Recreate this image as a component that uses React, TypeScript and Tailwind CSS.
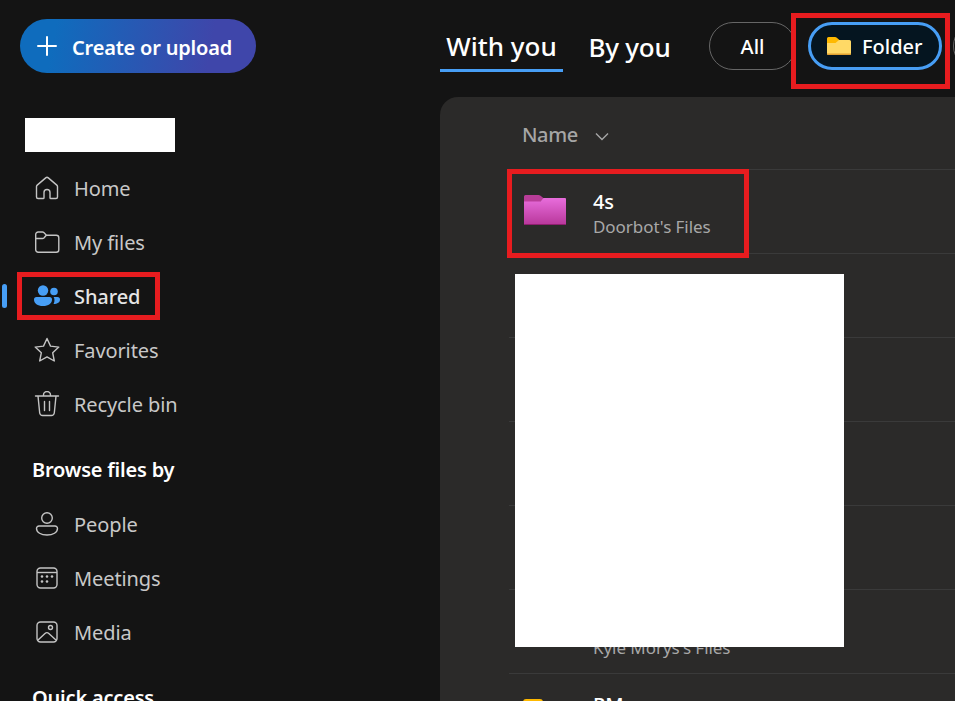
import React from 'react';

const font = { fontFamily: '"Noto Sans", "Open Sans", sans-serif' };

const HomeIcon = () => (
    <svg width="26" height="26" viewBox="0 0 26 26" fill="none" stroke="#c4c4c4" strokeWidth="1.4">
        <path d="M4 23.500h5.200a.8.8 0 0 0 .8-.8v-5.200a3 3 0 0 1 6 0v5.200a.8.8 0 0 0 .8.8H22a1.500 1.500 0 0 0 1.500-1.500V11.600a2 2 0 0 0-.7-1.500L14.300 2.900a2 2 0 0 0-2.600 0L3.200 10.100a2 2 0 0 0-.7 1.500V22A1.500 1.500 0 0 0 4 23.500z" />
    </svg>
);

const FilesIcon = () => (
    <svg width="26" height="26" viewBox="0 0 26 26" fill="none" stroke="#c4c4c4" strokeWidth="1.4">
        <path d="M1.700 5.500a2.500 2.500 0 0 1 2.500-2.500h4.300a2 2 0 0 1 1.300.5l2.700 2.700h9.800a2.500 2.500 0 0 1 2.500 2.500v12.100a2.500 2.500 0 0 1-2.500 2.500H4.200a2.500 2.500 0 0 1-2.500-2.500z" />
        <path d="M1.700 9.500h6.800a2 2 0 0 0 1.400-.6l2.400-2.700" />
    </svg>
);

const SharedIcon = () => (
    <svg width="26" height="26" viewBox="0 0 26 26" fill="#479ef5">
        <circle cx="9" cy="7.500" r="5.200" />
        <path d="M0 16.500a2.500 2.500 0 0 1 2.500-2.500h13a2.500 2.500 0 0 1 2.500 2.500c0 4-3.500 6.500-9 6.500s-9-2.500-9-6.500z" />
        <circle cx="20" cy="8.500" r="3.800" />
        <path d="M19.500 21c.8-1.300 1.100-3 .9-4.500a4 4 0 0 0-.8-2.500h3.900a2.500 2.500 0 0 1 2.500 2.500c0 2.800-2.500 4.500-6.500 4.500z" />
    </svg>
);

const StarIcon = () => (
    <svg width="26" height="26" viewBox="0 0 26 26" fill="none" stroke="#c4c4c4" strokeWidth="1.4" strokeLinejoin="round">
        <path d="M13 1.500l3.500 7.600 8.300 1-6.100 5.700 1.600 8.200-7.300-4.100-7.300 4.100 1.600-8.200-6.100-5.700 8.300-1z" />
    </svg>
);

const BinIcon = () => (
    <svg width="26" height="26" viewBox="0 0 26 26" fill="none" stroke="#c4c4c4" strokeWidth="1.4" strokeLinecap="round">
        <path d="M1.500 5h23M9.500 5V4a3.500 3.500 0 0 1 7 0v1M4 5l1.700 17a3 3 0 0 0 3 2.500h8.600a3 3 0 0 0 3-2.500L22 5M10.500 10.500v9M15.500 10.500v9" />
    </svg>
);

const PeopleIcon = () => (
    <svg width="26" height="26" viewBox="0 0 26 26" fill="none" stroke="#c4c4c4" strokeWidth="1.4">
        <circle cx="13" cy="7" r="5.300" />
        <path d="M5 15h16a2.500 2.500 0 0 1 2.500 2.500c0 4-4.500 6.500-10.500 6.500S2.500 21.500 2.500 17.500A2.500 2.500 0 0 1 5 15z" />
    </svg>
);

const MeetingsIcon = () => (
    <svg width="26" height="26" viewBox="0 0 26 26" fill="none" stroke="#c4c4c4" strokeWidth="1.4">
        <rect x="3" y="3" width="20" height="20" rx="3.500" />
        <path d="M3 7.500h20" />
        <g fill="#c4c4c4" stroke="none">
            <circle cx="8" cy="11.500" r="1.300" />
            <circle cx="13" cy="11.500" r="1.300" />
            <circle cx="18" cy="11.500" r="1.300" />
            <circle cx="8" cy="16.500" r="1.300" />
            <circle cx="13" cy="16.500" r="1.300" />
        </g>
    </svg>
);

const MediaIcon = () => (
    <svg width="26" height="26" viewBox="0 0 26 26" fill="none" stroke="#c4c4c4" strokeWidth="1.4">
        <rect x="3" y="3" width="20" height="20" rx="3.500" />
        <circle cx="16.500" cy="8.500" r="2" />
        <path d="M3.500 21.500l7.500-7a2.800 2.800 0 0 1 3.800 0l7.700 7" />
    </svg>
);

const NavItem = ({ icon, label, active }: { icon: React.ReactNode; label: string; active?: boolean }) => (
    <div className="relative flex h-[54px] shrink-0 items-center pl-[34px]">
        {active && <div className="absolute left-[2px] top-[15px] h-[24px] w-[5px] rounded-full bg-[#479ef5]" />}
        <div className="flex w-[40px] shrink-0 items-center">{icon}</div>
        <span className={`mt-[1px] text-[20px] tracking-[-0.1px] ${active ? 'font-medium text-[#e6e6e6]' : 'text-[#c8c8c8]'}`}>{label}</span>
    </div>
);

const Sidebar = () => (
    <div className="flex w-[440px] shrink-0 flex-col">
        <div className="shrink-0 pl-[20px] pt-[19px]">
            <div className="flex h-[54px] w-[236px] items-center rounded-full bg-[linear-gradient(100deg,#0f6cbd_15%,#3f46aa_80%)] pl-[16px]">
                <svg width="22" height="22" viewBox="0 0 22 22" stroke="#ffffff" strokeWidth="2" strokeLinecap="round">
                    <path d="M11 2v18M2 11h18" />
                </svg>
                <span className="ml-[14px] mt-[3px] text-[20px] font-semibold tracking-[-0.2px] text-white">Create or upload</span>
            </div>
        </div>
        <div className="h-[88px] shrink-0" />
        <NavItem icon={<HomeIcon />} label="Home" />
        <NavItem icon={<FilesIcon />} label="My files" />
        <NavItem icon={<SharedIcon />} label="Shared" active />
        <NavItem icon={<StarIcon />} label="Favorites" />
        <NavItem icon={<BinIcon />} label="Recycle bin" />
        <div className="flex h-[66px] shrink-0 items-end pb-[12px] pl-[32px] text-[20px] font-semibold tracking-[-0.2px] text-white">Browse files by</div>
        <NavItem icon={<PeopleIcon />} label="People" />
        <NavItem icon={<MeetingsIcon />} label="Meetings" />
        <NavItem icon={<MediaIcon />} label="Media" />
        <div className="flex h-[66px] shrink-0 items-end pb-[12px] pl-[32px] text-[20px] font-semibold tracking-[-0.2px] text-white">Quick access</div>
    </div>
);

const FolderGlyph = () => (
    <svg width="24" height="18" viewBox="0 0 24 18" className="shrink-0">
        <path d="M0 1.500A1.500 1.500 0 0 1 1.500 0h6.500a2 2 0 0 1 1.500.6L13 3.500 9 7H0z" fill="#ffb900" />
        <path d="M0 6h8.500L12 3h10.500A1.500 1.500 0 0 1 24 4.500V16.500a1.500 1.500 0 0 1-1.500 1.500h-21A1.500 1.500 0 0 1 0 16.500z" fill="#ffd966" />
        <path d="M0 16.500h24a1.500 1.500 0 0 1-1.500 1.500h-21A1.500 1.500 0 0 1 0 16.500z" fill="#e0a030" />
    </svg>
);

const PinkFolder = () => (
    <svg width="42" height="30" viewBox="0 0 42 30" className="shrink-0">
        <defs>
            <linearGradient id="pinkFolder" x1="0" y1="0" x2="0" y2="1">
                <stop offset="0" stopColor="#e86ddc" />
                <stop offset="1" stopColor="#b8379a" />
            </linearGradient>
        </defs>
        <path d="M0 1.500A1.500 1.500 0 0 1 1.500 0h13a3 3 0 0 1 2 .8L20 3.500 16 7H0z" fill="#b83d98" />
        <path d="M0 6.500h15.500a2 2 0 0 0 1.400-.6L19.500 3H41a1 1 0 0 1 1 1v25a1 1 0 0 1-1 1H1a1 1 0 0 1-1-1z" fill="url(#pinkFolder)" />
        <path d="M0 29h42a1 1 0 0 1-1 1H1a1 1 0 0 1-1-1z" fill="#8f1f70" />
    </svg>
);

const Row = ({ children }: { children?: React.ReactNode }) => (
    <div className="h-[84px] shrink-0 border-b border-[#3a3a3a]">{children}</div>
);

const Main = () => (
    <div className="flex min-w-0 flex-1 flex-col">
        <div className="flex h-[97px] shrink-0 items-start pt-[22px]">
            <div className="flex h-[50px] w-[123px] shrink-0 flex-col items-center justify-center border-b-[3px] border-[#479ef5] pt-[2px] text-[26px] font-medium text-white">
                With you
            </div>
            <div className="flex h-[50px] w-[133px] shrink-0 items-center justify-center text-[26px] font-medium tracking-[-0.2px] text-white">
                By you
            </div>
            <div className="ml-[13px] flex h-[48px] w-[87px] shrink-0 items-center justify-center rounded-full border border-[#666666] pt-[2px] text-[20px] font-medium text-white">
                All
            </div>
            <div className="ml-[12px] flex h-[48px] w-[134px] shrink-0 items-center rounded-full border-[3px] border-[#479ef5] bg-[#051520] pl-[16px]">
                <FolderGlyph />
                <span className="ml-[11px] mt-[2px] text-[20px] font-medium text-white">Folder</span>
            </div>
            <div className="ml-[11px] h-[48px] w-[48px] shrink-0 rounded-full border border-[#666666]" />
        </div>
        <div className="min-h-0 flex-1 rounded-tl-[18px] bg-[#2b2a29] pl-[69px]">
            <div className="h-[73px] shrink-0 border-b border-[#3a3a3a]">
                <div className="flex h-full items-center pl-[13px] pt-[4px]">
                    <span className="text-[20px] font-medium tracking-[-0.4px] text-[#a6a6a6]">Name</span>
                    <svg className="ml-[17px] mt-[3px]" width="14" height="9" viewBox="0 0 14 9" fill="none" stroke="#a6a6a6" strokeWidth="1.400">
                        <path d="M1 1.500l6 6 6-6" />
                    </svg>
                </div>
            </div>
            <Row>
                <div className="flex h-full items-center pl-[15px]">
                    <div className="mb-[4px]">
                        <PinkFolder />
                    </div>
                    <div className="ml-[27px] mt-[5px] flex flex-col">
                        <span className="text-[20px] font-medium leading-[26px] tracking-[-0.3px] text-white">4s</span>
                        <span className="text-[17px] leading-[24px] tracking-[-0.05px] text-[#a8a8a8]">Doorbot's Files</span>
                    </div>
                </div>
            </Row>
            <Row />
            <Row />
            <Row />
            <Row />
            <Row>
                <div className="flex h-full flex-col justify-start pl-[84px] pt-[46px]">
                    <span className="text-[17px] leading-[24px] tracking-[-0.05px] text-[#a8a8a8]">Kyle Morys's Files</span>
                </div>
            </Row>
            <div className="flex items-start pl-[14px] pt-[18px]">
                <svg className="mt-[7px] shrink-0" width="20" height="6" viewBox="0 0 20 6">
                    <path d="M0 6V3a3 3 0 0 1 3-3h14a3 3 0 0 1 3 3v3z" fill="#ffb900" />
                </svg>
                <span className="ml-[50px] text-[20px] font-medium leading-[26px] text-white">PM</span>
            </div>
        </div>
    </div>
);

export default function App() {
    return (
        <div className="relative flex h-[701px] w-[955px] overflow-hidden bg-[#141414]" style={font}>
            <Sidebar />
            <Main />
            {/* redactions and annotation boxes sit on top of the page */}
            <div className="absolute left-[25px] top-[118px] h-[34px] w-[150px] bg-white" />
            <div className="absolute left-[515px] top-[274px] h-[373px] w-[329px] bg-white" />
            <div className="absolute left-[17px] top-[272px] h-[48px] w-[143px] border-[5px] border-[#e71c1f]" />
            <div className="absolute left-[507px] top-[169px] h-[89px] w-[242px] border-[5px] border-[#e71c1f]" />
            <div className="absolute left-[791px] top-[13px] h-[76px] w-[159px] border-[5px] border-[#e71c1f]" />
        </div>
    );
}
